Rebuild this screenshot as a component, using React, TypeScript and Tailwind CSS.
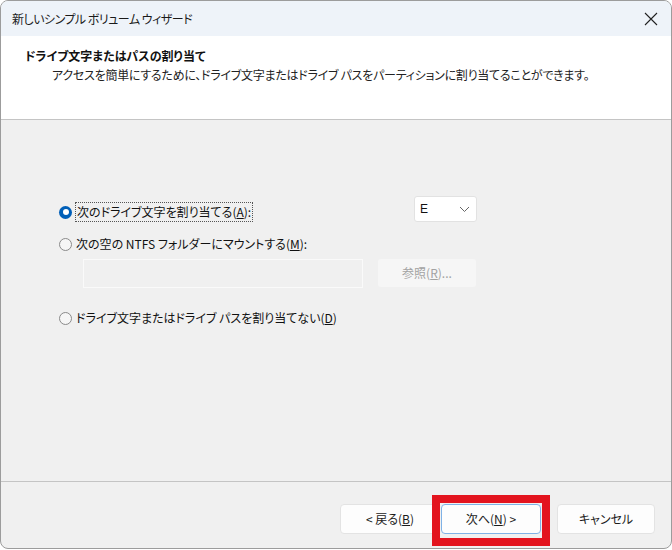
import React from 'react';

const jp = "font-['Noto_Sans_CJK_JP','Noto_Sans',sans-serif] [font-feature-settings:'palt']";

function Radio({ checked }: { checked?: boolean }) {
  if (checked) {
    return (
      <span className="w-[13px] h-[13px] rounded-full bg-[#005fb8] flex items-center justify-center shrink-0">
        <span className="w-[6px] h-[6px] rounded-full bg-white" />
      </span>
    );
  }
  return <span className="w-[13px] h-[13px] rounded-full border border-[#8a8a8a] bg-[#f6f6f6] shrink-0" />;
}

function FooterButton({ label, primary, width }: { label: React.ReactNode; primary?: boolean; width: string }) {
  return (
    <button
      className={`${width} h-[30px] rounded-[4px] bg-[#fdfdfd] text-[12px] text-[#1b1b1b] flex items-center justify-center ${
        primary ? 'border border-[#7fb2e6]' : 'border border-[#e3e3e3]'
      }`}
    >
      {label}
    </button>
  );
}

export default function App() {
  return (
    <div className={`w-[672px] h-[550px] bg-white ${jp}`}>
      <div className="relative w-[672px] h-[549px] border border-[#9c9c9c] rounded-[8px] overflow-hidden flex flex-col bg-[#f0f0f0]">
        {/* Title bar */}
        <div className="h-[35px] bg-[#eef3f9] flex items-center justify-between pl-[11px] pr-[13px] shrink-0">
          <span className="text-[12px] text-[#1a1a1a] tracking-[-0.5px]">新しいシンプル ボリューム ウィザード</span>
          <svg width="14" height="14" viewBox="0 0 14 14">
            <path d="M1 1 L13 13 M13 1 L1 13" stroke="#222" strokeWidth="1.1" />
          </svg>
        </div>

        {/* Header */}
        <div className="h-[84px] bg-white border-b border-[#c4c4c4] shrink-0 pt-[10px]">
          <div className="pl-[24px] text-[12px] font-bold text-[#111] leading-[20px]">ドライブ文字またはパスの割り当て</div>
          <div className="pl-[51px] text-[12px] text-[#222] leading-[18px] tracking-[-0.25px]">
            アクセスを簡単にするために、ドライブ文字またはドライブ パスをパーティションに割り当てることができます。
          </div>
        </div>

        {/* Body */}
        <div className="flex-1 pl-[58px] pt-[76px]">
          <div className="w-[418px] flex items-start">
            <div className="mt-[3px] h-[26px] flex items-center gap-[3px]">
              <Radio checked />
              <span className="h-[20px] px-[1px] flex items-center border border-dotted border-[#555] text-[12px] text-[#111]">
                次のドライブ文字を割り当てる(<u>A</u>):
              </span>
            </div>
            <div className="ml-auto w-[63px] h-[26px] bg-white border border-[#e2e2e2] rounded-[3px] flex items-center justify-between pl-[5px] pr-[6px]">
              <span className="text-[12px] text-[#111] font-['Liberation_Sans',sans-serif]">E</span>
              <svg width="11" height="7" viewBox="0 0 11 7">
                <path d="M1 1 L5.5 5.5 L10 1" stroke="#666" strokeWidth="1" fill="none" />
              </svg>
            </div>
          </div>

          <div className="mt-[9px] h-[20px] flex items-center gap-[4px]">
            <Radio />
            <span className="text-[12px] text-[#111]">
              次の空の NTFS フォルダーにマウントする(<u>M</u>):
            </span>
          </div>

          <div className="mt-[5px] ml-[24px] flex items-start gap-[15px]">
            <div className="w-[280px] h-[29px] border border-[#fafafa] bg-[#f0f0f0]" />
            <div className="w-[98px] h-[28px] bg-[#f6f6f6] rounded-[3px] flex items-center justify-center text-[12px] text-[#a2a2a2]">
              参照(<u>R</u>)...
            </div>
          </div>

          <div className="mt-[20px] h-[20px] flex items-center gap-[4px]">
            <Radio />
            <span className="text-[12px] text-[#111]">
              ドライブ文字またはドライブ パスを割り当てない(<u>D</u>)
            </span>
          </div>
        </div>

        {/* Footer */}
        <div className="h-[67px] shrink-0 border-t border-[#c4c4c4] flex justify-end items-start pt-[22px] pr-[16px]">
          <FooterButton width="w-[100px]" label={<>&lt; 戻る(<u>B</u>)</>} />
          <div className="ml-[1px]">
            <FooterButton width="w-[100px]" primary label={<>次へ(<u>N</u>) &gt;</>} />
          </div>
          <div className="ml-[16px]">
            <FooterButton width="w-[98px]" label="キャンセル" />
          </div>
        </div>

        {/* Highlight annotation */}
        <div className="absolute left-[431px] top-[494px] w-[118px] h-[51px] border-[8px] border-[#e3141e]" />
      </div>
    </div>
  );
}
